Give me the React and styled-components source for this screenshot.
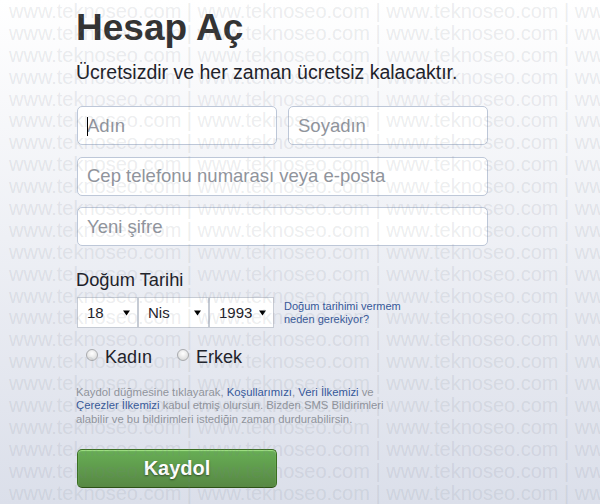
import React from 'react';
import styled, { createGlobalStyle } from 'styled-components';

const GlobalStyle = createGlobalStyle`
  html, body {
    margin: 0;
    padding: 0;
  }
  body {
    font-family: "Liberation Sans", Arial, Helvetica, sans-serif;
    background: #fff;
  }
`;

const Page = styled.div`
  position: relative;
  width: 600px;
  height: 504px;
  overflow: hidden;
  background: linear-gradient(#ffffff, #dbdfea);
`;

// repeated site stamp laid over the whole page
const Watermark = styled.div`
  position: absolute;
  inset: 0;
  z-index: 2;
  pointer-events: none;
  user-select: none;
  padding: 1px 0 0 9px;
  font-family: "Liberation Sans", Arial, sans-serif;
  font-size: 20px;
  line-height: 21.9px;
  color: rgba(120, 128, 140, 0.15);
  white-space: pre;
`;

const WatermarkRow = styled.div`
  height: 21.9px;
`;

const Form = styled.div`
  width: 411px;
  padding: 6px 0 0 77px;
`;

const Title = styled.h1`
  margin: 0 0 0 -1px;
  font-size: 37px;
  line-height: 44px;
  font-weight: bold;
  color: #333;
`;

const Subtitle = styled.p`
  margin: 10px 0 0 -1px;
  font-size: 19.5px;
  line-height: 24px;
  color: #1d2129;
`;

const Fields = styled.div`
  display: grid;
  row-gap: 11.5px;
  width: 411px;
  margin-top: 22px;
`;

const NameRow = styled.div`
  display: grid;
  grid-template-columns: 1fr 1fr;
  column-gap: 11px;
`;

const FieldWrap = styled.div`
  position: relative;

  &::after {
    content: '';
    display: ${p => (p.$caret ? 'block' : 'none')};
    position: absolute;
    left: 10px;
    top: 11px;
    width: 1px;
    height: 19px;
    background: #000;
  }
`;

const TextInput = styled.input`
  display: block;
  box-sizing: border-box;
  width: 100%;
  height: 39px;
  padding: 0 9px;
  border: 1px solid #bdc7d8;
  border-radius: 5px;
  background: #fff;
  font-family: inherit;
  font-size: 18.5px;
  color: #1d2129;
  outline: none;

  &::placeholder {
    color: #90949c;
  }
`;

const SectionLabel = styled.div`
  margin-top: 23px;
  margin-left: -1px;
  font-size: 18.3px;
  line-height: 22px;
  color: #1d2129;
`;

const BirthRow = styled.div`
  display: flex;
  align-items: center;
  margin-top: 6px;
`;

const SelectBox = styled.div`
  box-sizing: border-box;
  display: flex;
  align-items: center;
  justify-content: space-between;
  width: ${p => p.$w}px;
  height: 31px;
  padding: 0 7px 0 9px;
  border: 1px solid #c6cbd4;
  background: #fff;
  font-size: 15px;
  color: #1d2129;
`;

const HelpLink = styled.a`
  margin-left: 10px;
  font-size: 11px;
  line-height: 13px;
  color: #365899;
  text-decoration: none;
`;

const GenderRow = styled.div`
  display: flex;
  gap: 25px;
  margin-top: 18px;
  padding-left: 9px;
`;

const RadioLabel = styled.label`
  display: flex;
  align-items: center;
  font-size: 18px;
  line-height: 22px;
  color: #1d2129;
`;

const Radio = styled.span`
  box-sizing: border-box;
  width: 12px;
  height: 12px;
  margin: 0 7px 4px 0;
  border-radius: 50%;
  border: 1px solid #a9abae;
  background: radial-gradient(circle at 50% 35%, #ffffff 0%, #e4e4e4 60%, #cdcdcd 100%);
`;

const Terms = styled.p`
  margin: 18px 0 0 -1px;
  font-size: 11.3px;
  line-height: 13.3px;
  color: #90949c;

  a {
    color: #365899;
    text-decoration: none;
  }
`;

const SubmitButton = styled.button`
  display: block;
  box-sizing: border-box;
  width: 200px;
  height: 39px;
  margin-top: 23px;
  padding: 0;
  border: 1px solid;
  border-color: #3b6e22 #3b6e22 #2c5115;
  border-radius: 5px;
  background: linear-gradient(#67ae55, #578843);
  box-shadow: inset 0 1px 1px #a4e388;
  font-family: inherit;
  font-size: 20px;
  font-weight: bold;
  color: #fff;
  text-shadow: 0 1px 2px rgba(0, 0, 0, 0.5);
  cursor: pointer;
`;

const Arrow = () => (
  <svg width="7" height="6" viewBox="0 0 7 6">
    <path d="M0 0.5H7L3.5 5.5Z" fill="#000" />
  </svg>
);

const Select = ({ value, width }) => (
  <SelectBox $w={width}>
    <span>{value}</span>
    <Arrow />
  </SelectBox>
);

export default function App() {
  return (
    <>
      <GlobalStyle />
      <Page>
        <Form>
          <Title>Hesap Aç</Title>
          <Subtitle>Ücretsizdir ve her zaman ücretsiz kalacaktır.</Subtitle>

          <Fields>
            <NameRow>
              <FieldWrap $caret>
                <TextInput placeholder="Adın" />
              </FieldWrap>
              <FieldWrap>
                <TextInput placeholder="Soyadın" />
              </FieldWrap>
            </NameRow>
            <TextInput placeholder="Cep telefonu numarası veya e-posta" />
            <TextInput type="password" placeholder="Yeni şifre" />
          </Fields>

          <SectionLabel>Doğum Tarihi</SectionLabel>
          <BirthRow>
            <Select value="18" width={61} />
            <Select value="Nis" width={71} />
            <Select value="1993" width={65} />
            <HelpLink href="#">
              Doğum tarihimi vermem
              <br />
              neden gerekiyor?
            </HelpLink>
          </BirthRow>

          <GenderRow>
            <RadioLabel>
              <Radio />
              Kadın
            </RadioLabel>
            <RadioLabel>
              <Radio />
              Erkek
            </RadioLabel>
          </GenderRow>

          <Terms>
            Kaydol düğmesine tıklayarak, <a href="#">Koşullarımızı</a>, <a href="#">Veri İlkemizi</a> ve
            <br />
            <a href="#">Çerezler İlkemizi</a> kabul etmiş olursun. Bizden SMS Bildirimleri
            <br />
            alabilir ve bu bildirimleri istediğin zaman durdurabilirsin.
          </Terms>

          <SubmitButton>Kaydol</SubmitButton>
        </Form>

        <Watermark>
          {Array.from({ length: 24 }, (_, i) => (
            <WatermarkRow key={i}>{'www.teknoseo.com | '.repeat(4)}</WatermarkRow>
          ))}
        </Watermark>
      </Page>
    </>
  );
}
